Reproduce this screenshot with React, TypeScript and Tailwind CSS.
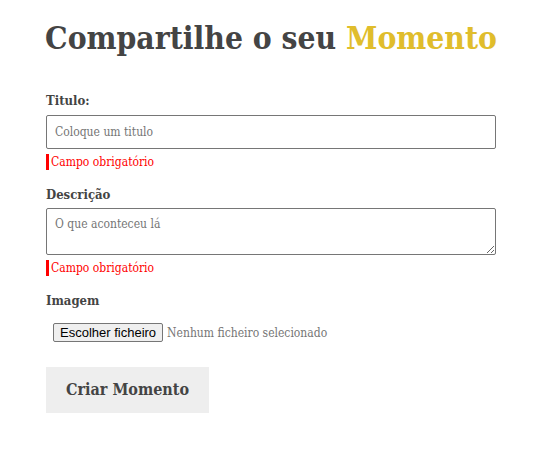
const serif = "font-['DejaVu_Serif_Condensed','DejaVu_Serif',serif]";

const FieldError = () => (
    <p className="mt-[5px] border-l-[3px] border-[#ff0000] pl-[2px] text-[12px] leading-[16px] text-[#ff0000]">
        Campo obrigatório
    </p>
);

const App = () => {
    return (
        <div className={`min-h-[455px] bg-white ${serif}`}>
            <div className="ml-[46px] w-[450px] pt-[18px]">
                <h1 className="-mx-[4px] whitespace-nowrap text-center text-[31.5px] font-bold leading-[40px] text-[#444]">
                    Compartilhe o seu <span className="text-[#e0bd2c]">Momento</span>
                </h1>

                <form className="mt-[34px]">
                    {/* Titulo */}
                    <label className="block text-[13px] font-bold leading-[18px] text-[#444]">Titulo:</label>
                    <input
                        type="text"
                        placeholder="Coloque um titulo"
                        className={`mt-[5px] block h-[34px] w-full rounded-[2px] border border-[#767676] px-[8px] text-[12px] text-[#444] placeholder:text-[#757575] ${serif}`}
                    />
                    <FieldError />

                    {/* Descrição */}
                    <label className="mt-[16px] block text-[13px] font-bold leading-[18px] text-[#444]">Descrição</label>
                    <textarea
                        placeholder="O que aconteceu lá"
                        className={`mt-[4px] block h-[47px] w-full rounded-[2px] border border-[#767676] px-[8px] py-[6px] text-[12px] text-[#444] placeholder:text-[#757575] ${serif}`}
                    />
                    <FieldError />

                    {/* Imagem */}
                    <label className="mt-[16px] block text-[13px] font-bold leading-[18px] text-[#444]">Imagem</label>
                    <div className="mt-[13px] flex items-center pl-[7px]">
                        <button
                            type="button"
                            className="h-[19px] rounded-[2px] border border-[#767676] bg-[#efefef] px-[6px] font-['Liberation_Sans',Arial,sans-serif] text-[13px] leading-[17px] text-black"
                        >
                            Escolher ficheiro
                        </button>
                        <span className="ml-[4px] text-[12px] text-[#757575]">Nenhum ficheiro selecionado</span>
                    </div>

                    <button
                        type="button"
                        className="mt-[25px] block h-[46px] w-[163px] bg-[#eeeeee] text-[16px] font-bold text-[#444]"
                    >
                        Criar Momento
                    </button>
                </form>
            </div>
        </div>
    );
};

export default App;
